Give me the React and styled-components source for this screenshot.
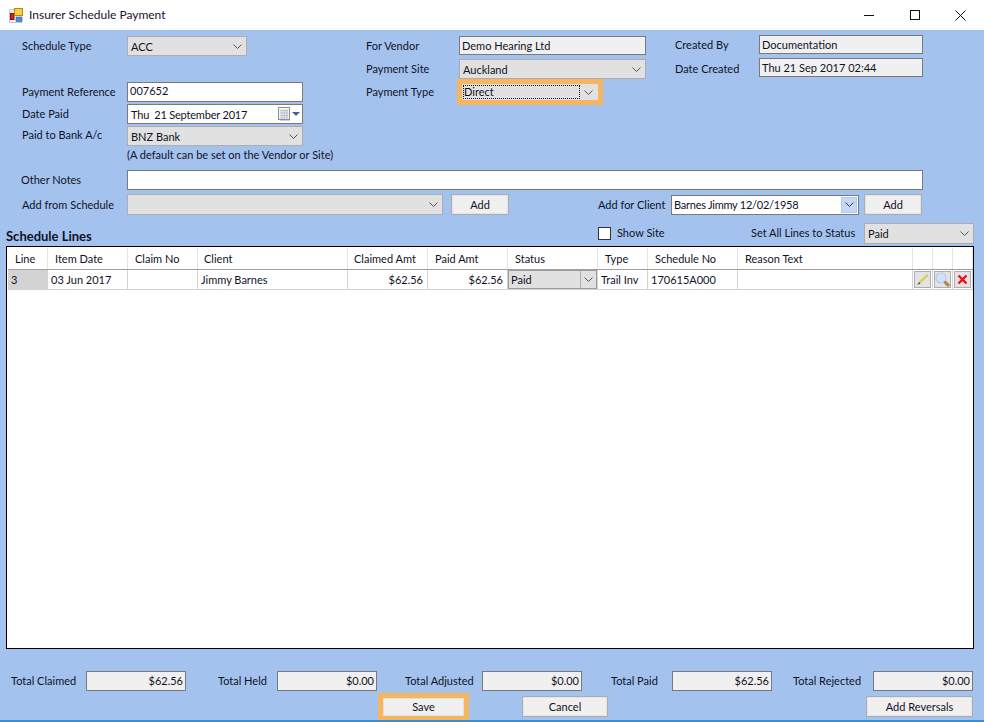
import React from "react";
import styled, { createGlobalStyle } from "styled-components";

const Global = createGlobalStyle`
  html, body { margin: 0; padding: 0; background: #fff; }
  * { box-sizing: border-box; }
  body { font-family: Lato, "Liberation Sans", sans-serif; font-size: 11px; color: #12121f; }
`;

const Win = styled.div`
  width: 984px; height: 722px; display: flex; flex-direction: column; overflow: hidden; background: #a3c2ee;
  border-bottom: 2px solid #2f8fe0;
`;
const TitleBar = styled.div`
  height: 30px; flex: none; background: #fff; display: flex; align-items: center; padding: 0 1px 0 9px; font-size: 12px;
`;
const TitleText = styled.span` margin-left: 5px; padding-bottom: 2px; flex: 1; color: #1c1030; `;
const WinBtn = styled.div` width: 45.5px; height: 30px; display: flex; align-items: center; justify-content: center; `;
const Top = styled.div` height: 140px; flex: none; display: flex; `;
const Col = styled.div`
  width: ${p => p.$w}px; margin-left: ${p => p.$left || 0}px; padding-top: ${p => p.$top}px; display: flex; flex-direction: column;
`;
const Row = styled.div`
  display: flex; align-items: center; height: ${p => p.$h}px; margin-top: ${p => p.$mt || 0}px; flex: none;
`;
const Label = styled.span`
  display: block; flex: none; width: ${p => p.$w ? p.$w + "px" : "auto"}; white-space: nowrap;
  margin-left: ${p => p.$ml || 0}px;
  padding-bottom: ${p => p.$up === undefined ? 2 : p.$up}px; padding-top: ${p => p.$down || 0}px;
`;
const Combo = styled.div`
  width: ${p => p.$w}px; height: ${p => p.$h || 20}px; flex: none; display: flex; align-items: center; position: relative;
  background: #e1e1e1; border: 1px solid #adadad; padding-left: 3px; margin-left: ${p => p.$ml || 0}px;
`;
const ComboText = styled.span` flex: 1; white-space: nowrap; `;
const ChevronBox = styled.span` width: 17px; flex: none; display: flex; align-items: center; justify-content: center; `;
const Focused = styled.div`
  width: 136px; height: 16px; margin: 0 0 0 3px; flex: none; display: flex; align-items: center; background: #e1e1e1;
  box-shadow: 0 0 0 5px #f6b65f; 
`;
const FocusText = styled.span`
  width: 117px; height: 14px; margin-left: 1px; border: 1px dotted #111; display: flex; align-items: center; line-height: 12px;
`;
const Input = styled.div`
  width: ${p => p.$w}px; height: ${p => p.$h || 20}px; flex: none; background: ${p => p.$ro ? "#f0f0f0" : "#fff"};
  border: 1px solid #7a7a7a; display: flex; align-items: center; padding: 0 ${p => p.$right ? 2 : 1}px ${p => p.$up || 0}px 2px;
  justify-content: ${p => p.$right ? "flex-end" : "flex-start"}; white-space: pre;
`;
const DateText = styled.span` flex: 1; padding-left: 1px; white-space: pre; letter-spacing: -0.2px; `;
const Hint = styled.div` margin: 1px 0 0 105px; white-space: nowrap; height: 16px; line-height: 16px; `;
const Notes = styled.div` display: flex; align-items: center; height: 20px; padding-left: 21px; flex: none; `;
const AddRow = styled.div` display: flex; align-items: center; height: 21px; margin-top: 4px; padding-left: 22px; flex: none; `;
const Button = styled.div`
  width: ${p => p.$w}px; height: ${p => p.$h || 21}px; margin-left: ${p => p.$ml || 0}px; flex: none;
  display: flex; align-items: center; justify-content: center; background: #f0f0f0; border: 1px solid #adadad;
  box-shadow: inset 0 0 0 1px #e4e4e4;
`;
const HiliteButton = styled(Button)`
  border: 1px solid #e1e1e1; box-shadow: 0 0 0 5px #f6b65f;
`;
const LinesHead = styled.div` display: flex; align-items: center; height: 21px; margin-top: 8px; padding-left: 6px; flex: none; `;
const LinesTitle = styled.span` width: 592px; font-weight: 700; font-size: 13px; padding-top: 4px; flex: none; `;
const Check = styled.span` width: 13px; height: 13px; border: 1px solid #333; background: #fff; flex: none; `;
const Grid = styled.div`
  flex: none; height: 403px; margin: 2px 10px 0 6px; background: #fff; border: 1px solid #000; padding: 1px 0 0 1px;
`;
const GridRow = styled.div`
  display: grid; grid-template-columns: 40px 80px 70px 150px 80px 80px 90px 50px 90px 175px 20px 20px 20px;
  height: ${p => p.$h}px; width: 965px; border-bottom: ${p => p.$head ? "1px solid #a0a0a0" : "1px solid #d3d3d3"};
`;
const HeadCell = styled.div`
  border-right: 1px solid #e4e4e4; display: flex; align-items: center; padding-left: ${p => p.$pad || 7}px; white-space: nowrap;
`;
const Cell = styled.div`
  border-right: 1px solid #d3d3d3; display: flex; align-items: center; white-space: nowrap;
  padding: 0 ${p => p.$right ? 4 : 3}px 0 3px;
  justify-content: ${p => p.$right ? "flex-end" : "flex-start"};
  background: ${p => p.$grey ? "#d3d3d3" : "#fff"};
`;
const StatusCell = styled(Cell)` padding: 0; `;
const StatusBox = styled.div`
  width: 89px; height: 19px; background: #e1e1e1; border: 1px solid #9c9c9c; display: flex; align-items: center; padding-left: 2px;
`;
const StatusArrow = styled.span`
  width: 16px; height: 17px; flex: none; border-left: 1px solid #adadad; display: flex; align-items: center; justify-content: center;
`;
const IconCell = styled(Cell)` padding: 0; justify-content: center; `;
const IconBtn = styled.div`
  width: 17px; height: 17px; background: #e3e3e3; border: 1px solid #adadad; display: flex; align-items: center; justify-content: center;
`;
const Totals = styled.div`
  display: grid; grid-template-columns: 207px 187px 206px 182px 180px; height: 20px; margin-top: 22px; padding-left: 11px; flex: none;
`;
const TotalGroup = styled.div` display: flex; align-items: center; `;
const Actions = styled.div` display: flex; align-items: center; height: 21px; margin-top: 5px; flex: none; `;

const Chevron = ({ c = "#555" }) => (
  <svg width="9" height="5" viewBox="0 0 9 5"><path d="M0.5 0.5 L4.5 4.5 L8.5 0.5" fill="none" stroke={c} strokeWidth="1" /></svg>
);
const AppIcon = () => (
  <svg width="15" height="15" viewBox="0 0 15 15">
    <path d="M0.5 1.5h13M0.5 1.5v13M0.5 14.5h13M4 1.5v2M0.5 4h3" stroke="#c4c4c4" fill="none" />
    <rect x="1.5" y="5.5" width="3.5" height="6" fill="#d8201c" stroke="#8a1010" />
    <rect x="5.5" y="0.5" width="8" height="7" fill="#f8d040" stroke="#b8861a" />
    <rect x="7" y="9" width="6" height="4.5" fill="#4a8ae0" stroke="#2a5ea8" strokeWidth="0.6" />
  </svg>
);
const CalIcon = () => (
  <svg width="23" height="14" viewBox="0 0 23 14">
    <rect x="0.5" y="0.5" width="11" height="12" fill="#f2f2f2" stroke="#8f8f8f" />
    <path d="M2 3.5h8M2 6h8M2 8.5h8M2 11h8M4 3v8M6.5 3v8M9 3v8" stroke="#b4bcc8" strokeWidth="0.9" />
    <path d="M12 13.5h-10" stroke="#d0d0d0" />
    <path d="M14 5h8l-4 4z" fill="#44648e" />
  </svg>
);
const Pencil = () => (
  <svg width="13" height="13" viewBox="0 0 13 13">
    <path d="M3.2 9.2 L10.8 1.6 L11.8 2.6 L4.2 10.2 Z" fill="#f6ea1e" stroke="#8a7d10" strokeWidth="0.4" />
    <path d="M3.2 9.2 L1.2 12 L4.2 10.2 Z" fill="#111" />
  </svg>
);
const Lens = () => (
  <svg width="15" height="15" viewBox="0 0 15 15">
    <circle cx="6" cy="6" r="5" fill="#cfe2f8" stroke="#b4cdee" strokeWidth="1.2" />
    <path d="M10.5 10.5 L13 13" stroke="#b5885a" strokeWidth="3.2" strokeLinecap="round" />
  </svg>
);
const Cross = () => (
  <svg width="11" height="11" viewBox="0 0 11 11">
    <path d="M1.5 1.5 L9.5 9.5 M9.5 1.5 L1.5 9.5" stroke="#e8101a" strokeWidth="2.4" />
  </svg>
);

const ComboBox = ({ w, h, ml, children }) => (
  <Combo $w={w} $h={h} $ml={ml}>
    <ComboText>{children}</ComboText>
    <ChevronBox><Chevron /></ChevronBox>
  </Combo>
);

const ClientCombo = styled(Input)` position: relative; padding-right: 0; letter-spacing: -0.25px; `;
const ClientArrow = styled.span`
  width: 16px; height: 16px; margin-right: 1px; margin-left: auto; background: #c6d8f4; border: 1px solid #b4c8ea; display: flex; align-items: center; justify-content: center;
`;

const heads = [
  ["Line"], ["Item Date"], ["Claim No"], ["Client", 6], ["Claimed Amt", 6], ["Paid Amt"], ["Status"],
  ["Type"], ["Schedule No"], ["Reason Text"], [""], [""], [""],
];

export default function App() {
  return (
    <Win>
      <Global />
      <TitleBar>
        <AppIcon />
        <TitleText>Insurer Schedule Payment</TitleText>
        <WinBtn><svg width="10" height="10" viewBox="0 0 10 10"><path d="M0 5.5h10" stroke="#111" /></svg></WinBtn>
        <WinBtn><svg width="10" height="10" viewBox="0 0 10 10"><rect x=".5" y=".5" width="9" height="9" fill="none" stroke="#111" /></svg></WinBtn>
        <WinBtn><svg width="11" height="11" viewBox="0 0 11 11"><path d="M.5 .5l10 10M10.5 .5l-10 10" stroke="#111" /></svg></WinBtn>
      </TitleBar>

      <Top>
        <Col $w={344} $left={22} $top={6}>
          <Row $h={20}><Label $w={105}>Schedule Type</Label><ComboBox w={120}>ACC</ComboBox></Row>
          <Row $h={20} $mt={26}><Label $w={105}>Payment Reference</Label><Input $w={176} $up={3}>007652</Input></Row>
          <Row $h={20} $mt={2}>
            <Label $w={105}>Date Paid</Label>
            <Input $w={176} $up={0}><DateText>Thu  21 September 2017</DateText><CalIcon /></Input>
          </Row>
          <Row $h={20} $mt={2}><Label $w={105} $up={4}>Paid to Bank A/c</Label><ComboBox w={176}>BNZ Bank</ComboBox></Row>
          <Hint>(A default can be set on the Vendor or Site)</Hint>
        </Col>
        <Col $w={309} $top={6}>
          <Row $h={19}><Label $w={93} $up={0}>For Vendor</Label><Input $w={187} $h={19} $ro>Demo Hearing Ltd</Input></Row>
          <Row $h={20} $mt={4}><Label $w={93}>Payment Site</Label><ComboBox w={187}>Auckland</ComboBox></Row>
          <Row $h={16} $mt={5}>
            <Label $w={93}>Payment Type</Label>
            <Focused>
              <FocusText>Direct</FocusText>
              <ChevronBox><Chevron /></ChevronBox>
            </Focused>
          </Row>
        </Col>
        <Col $w={250} $top={5}>
          <Row $h={19}><Label $w={84} $up={0}>Created By</Label><Input $w={164} $h={19} $ro>Documentation</Input></Row>
          <Row $h={19} $mt={4}><Label $w={84} $up={0} $down={2}>Date Created</Label><Input $w={164} $h={19} $ro>Thu 21 Sep 2017 02:44</Input></Row>
        </Col>
      </Top>

      <Notes><Label $w={106}>Other Notes</Label><Input $w={796} /></Notes>
      <AddRow>
        <Label $w={105} $up={0}>Add from Schedule</Label>
        <ComboBox w={316} h={21} />
        <Button $w={58} $ml={8}>Add</Button>
        <Label $w={73} $ml={89} $up={0}>Add for Client</Label>
        <ClientCombo $w={188}>Barnes Jimmy 12/02/1958<ClientArrow><Chevron c="#2a3a66" /></ClientArrow></ClientCombo>
        <Button $w={58} $ml={5}>Add</Button>
      </AddRow>

      <LinesHead>
        <LinesTitle>Schedule Lines</LinesTitle>
        <Check />
        <Label $w={134} $ml={6}>Show Site</Label>
        <Label $w={113}>Set All Lines to Status</Label>
        <ComboBox w={110} h={21}>Paid</ComboBox>
      </LinesHead>

      <Grid>
        <GridRow $h={22} $head>
          {heads.map(([h, pad], i) => <HeadCell key={i} $pad={pad}>{h}</HeadCell>)}
        </GridRow>
        <GridRow $h={20}>
          <Cell $grey>3</Cell>
          <Cell>03 Jun 2017</Cell>
          <Cell />
          <Cell>Jimmy Barnes</Cell>
          <Cell $right>$62.56</Cell>
          <Cell $right>$62.56</Cell>
          <StatusCell>
            <StatusBox><ComboText>Paid</ComboText><StatusArrow><Chevron /></StatusArrow></StatusBox>
          </StatusCell>
          <Cell>Trail Inv</Cell>
          <Cell>170615A000</Cell>
          <Cell />
          <IconCell><IconBtn><Pencil /></IconBtn></IconCell>
          <IconCell><IconBtn><Lens /></IconBtn></IconCell>
          <IconCell><IconBtn><Cross /></IconBtn></IconCell>
        </GridRow>
      </Grid>

      <Totals>
        <TotalGroup><Label $w={75}>Total Claimed</Label><Input $w={100} $ro $right $up={2}>$62.56</Input></TotalGroup>
        <TotalGroup><Label $w={59}>Total Held</Label><Input $w={100} $ro $right $up={2}>$0.00</Input></TotalGroup>
        <TotalGroup><Label $w={77}>Total Adjusted</Label><Input $w={100} $ro $right $up={2}>$0.00</Input></TotalGroup>
        <TotalGroup><Label $w={61}>Total Paid</Label><Input $w={100} $ro $right $up={2}>$62.56</Input></TotalGroup>
        <TotalGroup><Label $w={80}>Total Rejected</Label><Input $w={100} $ro $right $up={2}>$0.00</Input></TotalGroup>
      </Totals>
      <Actions>
        <HiliteButton $w={81} $h={18} $ml={383}>Save</HiliteButton>
        <Button $w={86} $ml={58}>Cancel</Button>
        <Button $w={107} $ml={258}>Add Reversals</Button>
      </Actions>
    </Win>
  );
}
